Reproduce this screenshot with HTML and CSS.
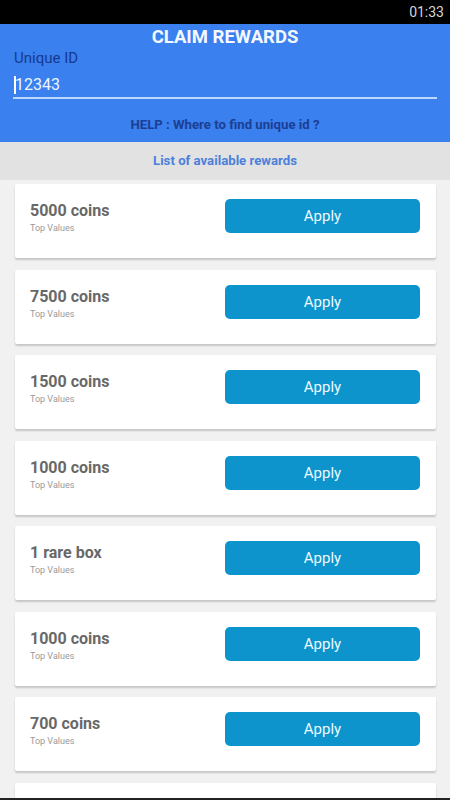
FILE: index.html
```html
<!DOCTYPE html>
<html>
<head>
<meta charset="utf-8">
<link rel="stylesheet" href="styles.css">
</head>
<body>
<div class="status"><span class="time">01:33</span></div>
<header class="header">
  <h1 class="title">CLAIM REWARDS</h1>
  <div class="label">Unique ID</div>
  <div class="input"><span class="cursor"></span>12343</div>
  <div class="help">HELP : Where to find unique id ?</div>
</header>
<div class="band">List of available rewards</div>
<main class="list">
  <div class="card"><div class="info"><div class="name">5000 coins</div><div class="sub">Top Values</div></div><button class="apply">Apply</button></div>
  <div class="card"><div class="info"><div class="name">7500 coins</div><div class="sub">Top Values</div></div><button class="apply">Apply</button></div>
  <div class="card"><div class="info"><div class="name">1500 coins</div><div class="sub">Top Values</div></div><button class="apply">Apply</button></div>
  <div class="card"><div class="info"><div class="name">1000 coins</div><div class="sub">Top Values</div></div><button class="apply">Apply</button></div>
  <div class="card"><div class="info"><div class="name">1 rare box</div><div class="sub">Top Values</div></div><button class="apply">Apply</button></div>
  <div class="card"><div class="info"><div class="name">1000 coins</div><div class="sub">Top Values</div></div><button class="apply">Apply</button></div>
  <div class="card"><div class="info"><div class="name">700 coins</div><div class="sub">Top Values</div></div><button class="apply">Apply</button></div>
  <div class="card"><div class="info"></div><button class="apply" aria-label="Apply"></button></div>
</main>
<div class="navedge"></div>
</body>
</html>
```
FILE: styles.css
```css
* { box-sizing: border-box; }
html, body { margin: 0; padding: 0; }
body {
  width: 450px;
  height: 800px;
  overflow: hidden;
  background: #f1f1f1;
  font-family: Roboto, "Liberation Sans", Arial, sans-serif;
}
.status {
  height: 24px;
  background: #000;
  display: flex;
  justify-content: flex-end;
  align-items: center;
  padding-right: 6px;
}
.time {
  color: #d6d6d6;
  font-size: 14px;
  line-height: 24px;
}
.header {
  background: #3a80ef;
  padding: 0 13px 9px 13px;
}
.title {
  margin: 0;
  text-align: center;
  color: #f4f8ff;
  font-size: 18.5px;
  font-weight: bold;
  line-height: 26px;
}
.label {
  color: #163a8e;
  font-size: 15px;
  line-height: 16px;
  padding-left: 1px;
}
.input {
  display: flex;
  align-items: center;
  color: #eef4ff;
  font-size: 16px;
  line-height: 20px;
  padding-top: 9px;
  padding-bottom: 2px;
  border-bottom: 2px solid #bcd8ff;
  padding-left: 1px;
}
.cursor {
  display: inline-block;
  width: 2px;
  height: 18px;
  background: #ffffff;
  margin-right: -1px;
}
.help {
  margin-top: 18px;
  text-align: center;
  color: #1b3f93;
  font-size: 13.2px;
  font-weight: bold;
  line-height: 16px;
}
.band {
  height: 38px;
  background: #e2e2e2;
  text-align: center;
  color: #4c80da;
  font-size: 13.2px;
  font-weight: bold;
  line-height: 38px;
}
.list {
  padding: 4px 14px 0 15px;
}
.card {
  height: 74px;
  margin-bottom: 11.5px;
  background: #fff;
  border-radius: 2px;
  box-shadow: 0 2px 2px rgba(0, 0, 0, 0.18);
  display: flex;
  justify-content: space-between;
  align-items: flex-start;
  padding: 15px 16px 0 15px;
}
.info {
  padding-top: 2px;
}
.name {
  color: #686868;
  font-size: 16px;
  font-weight: bold;
  line-height: 20px;
}
.sub {
  color: #999;
  font-size: 9px;
  line-height: 12px;
  margin-top: 1px;
}
.apply {
  width: 195px;
  height: 34px;
  border: none;
  border-radius: 5px;
  background: #0d94cd;
  color: #eefaff;
  font-family: Roboto, "Liberation Sans", Arial, sans-serif;
  font-size: 15px;
  padding: 0;
}
.navedge {
  position: fixed;
  left: 0;
  right: 0;
  bottom: 0;
  height: 2px;
  background: #222;
}
```
